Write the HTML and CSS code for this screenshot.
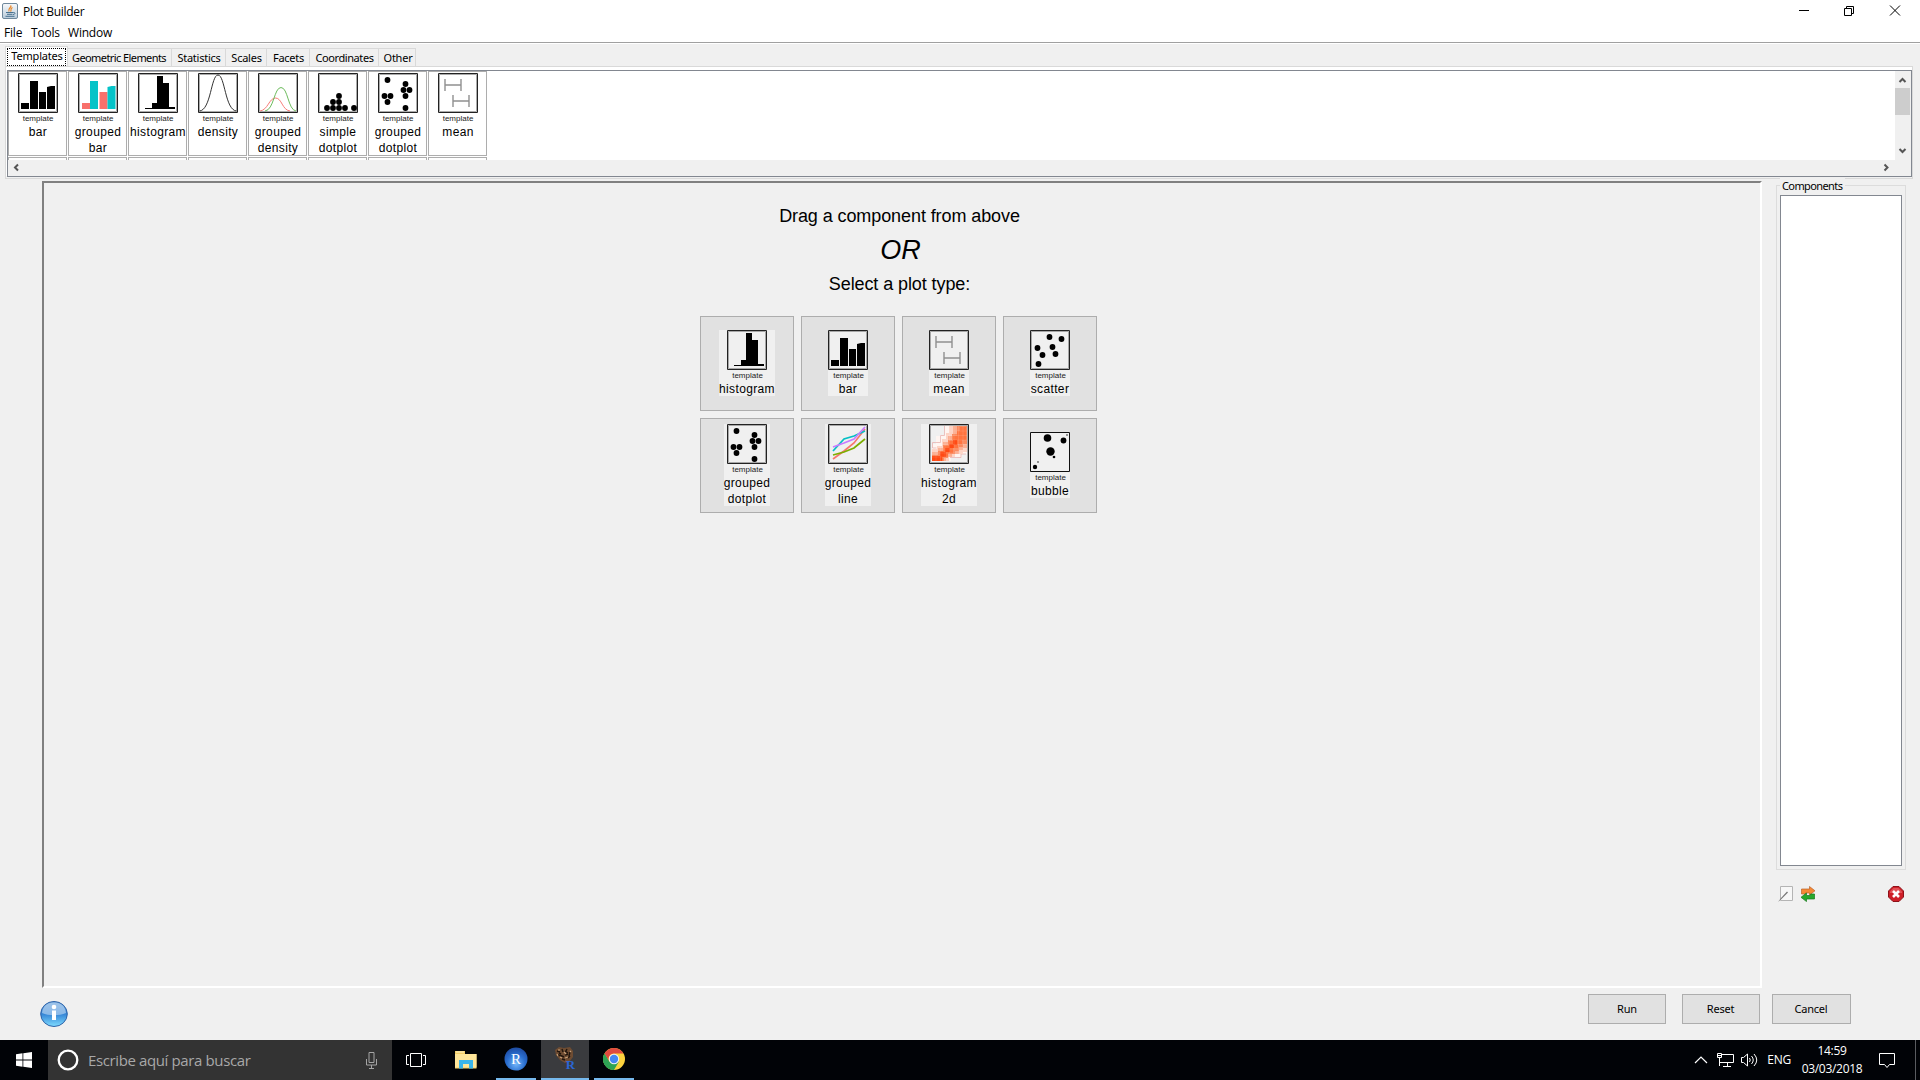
FILE: index.html
```html
<!DOCTYPE html>
<html lang="en">
<head>
<meta charset="utf-8">
<title>Plot Builder</title>
<link rel="stylesheet" href="styles.css">
</head>
<body>
<svg class="defs" aria-hidden="true">
  <symbol id="frame" viewBox="0 0 40 40"><path d="M.5 .5H39.500V39.500H.5Z" fill="none" stroke="#222"/><path d="M1.500 1.500H38.500V38.500H1.500Z" fill="none" stroke="#888" stroke-opacity=".7"/></symbol>
  <symbol id="bar" viewBox="0 0 40 40"><use href="#frame"/><path d="M3 30h8v6H3zM12 8h8v28h-8zM21 19h7v17h-7zM29 14l4-1h4v23h-8z"/></symbol>
  <symbol id="gbar" viewBox="0 0 40 40"><use href="#frame"/><path fill="#f8706b" d="M4 30h8v6H4zM21.500 19h8v17h-8z"/><path fill="#05c3c8" d="M12 8h8v28h-8zM29.500 14l4-1h4v23h-8z"/></symbol>
  <symbol id="hist" viewBox="0 0 40 40"><use href="#frame"/><path d="M7 35h7v-5h5V3h6v7h6v24h6v2H7z"/></symbol>
  <symbol id="density" viewBox="0 0 40 40"><use href="#frame"/><path fill="none" stroke="#333" d="M1.500 38C13 37 13 2 20 2s7 35 18.500 36"/></symbol>
  <symbol id="gdensity" viewBox="0 0 40 40"><use href="#frame"/><path fill="none" stroke="#f87c78" d="M2 38C10 37 11 25 17.500 25S24 37 32 38"/><path fill="none" stroke="#6cbb5c" d="M7 38C16 37 16 14.500 23 14.500S30 37 38 38"/></symbol>
  <symbol id="sdot" viewBox="0 0 40 40"><use href="#frame"/><circle cx="9" cy="35" r="2.900"/><circle cx="15" cy="35" r="2.900"/><circle cx="21" cy="35" r="2.900"/><circle cx="27" cy="35" r="2.900"/><circle cx="36" cy="35" r="2.900"/><circle cx="15" cy="29" r="2.900"/><circle cx="21" cy="29" r="2.900"/><circle cx="21" cy="23" r="2.900"/></symbol>
  <symbol id="gdot" viewBox="0 0 40 40"><use href="#frame"/><circle cx="9.500" cy="7" r="2.900"/><circle cx="6.500" cy="23" r="2.900"/><circle cx="12.500" cy="23" r="2.900"/><circle cx="9.500" cy="29" r="2.900"/><circle cx="27.500" cy="11" r="2.900"/><circle cx="25.500" cy="17" r="2.900"/><circle cx="31.500" cy="17" r="2.900"/><circle cx="27.500" cy="23" r="2.900"/><circle cx="27.500" cy="35" r="2.900"/></symbol>
  <symbol id="mean" viewBox="0 0 40 40"><use href="#frame"/><path fill="none" stroke="#909090" stroke-width="1.400" d="M7 6v12M23 6v12M7 12h16M15 22v12M31 22v12M15 28h16"/></symbol>
  <symbol id="scatter" viewBox="0 0 40 40"><use href="#frame"/><circle cx="19.500" cy="7" r="2.900"/><circle cx="31.500" cy="9" r="2.900"/><circle cx="7.500" cy="18" r="2.900"/><circle cx="22.500" cy="17" r="2.900"/><circle cx="12.500" cy="25" r="2.900"/><circle cx="25.500" cy="24" r="2.900"/><circle cx="8.500" cy="34" r="2.900"/></symbol>
  <symbol id="gline" viewBox="0 0 40 40"><use href="#frame"/><g fill="none" stroke-width="1.700"><path stroke="#f8766d" d="M5 35l11-8 10-8L37 5"/><path stroke="#7cae00" d="M5 31l11-3 10-4 11-9"/><path stroke="#05bfc4" d="M5 27l11-12 10-3 11-5"/><path stroke="#c77cff" d="M5 23l11-4 10-4L37 3"/></g></symbol>
  <symbol id="hist2d" viewBox="0 0 40 40">
    <path fill="#fff5f1" d="M16 2h22v28h-5v3H22v4H3V20h4v-8h4v-1h5z"/>
    <path fill="none" stroke="#e9b2b0" stroke-width=".8" d="M15.500 2v9.500h-4v7h-8V24h4M37 30h-5v3.500H21"/>
    <path fill="#fdd3c4" d="M20 2h18v26h-4v2h-8v3h-6v4H3v-12h5v-3h5v-7h4v-6h3z"/>
    <path fill="#fcae91" d="M24 2h14v22h-4v2h-4v4h-7v3h-6v4H3v-9h6v-4h5v-6h5v-6h5z"/>
    <path fill="#fb8a5e" d="M28 2h10v18h-4v3h-4v4h-4v3h-7v4h-4v3H3v-6h6v-4h5v-6h5v-5h4v-6h5z"/>
    <path fill="#ff7440" d="M31 3h6v13h-4v4h-4v4h-5v5h-5v4h-5v4H3v-5h8v-5h4v-5h5v-5h4v-5h4v-5h3z"/>
    <path fill="#ff4a14" d="M24 16h4v5h-4zM20 20h5v4h-5zM16 24h5v4h-5zM11 28h6v5h-6zM3 32h10v5H3z"/>
    <path stroke="#fff" stroke-opacity=".18" stroke-width=".6" d="M7 12v25M11.500 11v26M16 2v35M20.500 2v35M25 2v31M29.500 2v30M34 2v28M16 7h22M16 11.500h22M11 16h27M7 20.500h31M3 25h34M3 29h34M3 33h25"/>
    <use href="#frame"/>
  </symbol>
  <symbol id="bubble" viewBox="0 0 40 40"><path d="M.5 .5H39.500V39.500H.5Z" fill="none" stroke="#111"/><circle cx="17.500" cy="6" r="3.800"/><circle cx="33.500" cy="8.500" r="2.900"/><circle cx="37" cy="3" r=".9" fill="#666"/><circle cx="20.500" cy="19.500" r="4.200"/><circle cx="24" cy="25" r="1.300"/><circle cx="8" cy="30" r=".9" fill="#666"/><circle cx="5" cy="35" r="2.200"/></symbol>
</svg>

<header class="titlebar">
  <svg class="app-icon" width="16" height="16" viewBox="0 0 16 16"><defs><linearGradient id="jg" x1="0" y1="0" x2="0" y2="1"><stop offset="0" stop-color="#f7f9fb"/><stop offset="1" stop-color="#b9cbda"/></linearGradient></defs><rect x=".5" y=".5" width="15" height="15" rx="1.500" fill="url(#jg)" stroke="#6f889c"/><path d="M8.500 2.500C10.500 4 5.500 5 7 8.500M10.500 4.500C7.500 6 10 7 8.500 8.500" fill="none" stroke="#e8872a" stroke-width="1.200"/><path d="M4 9.500h7.500M5 11.300h5.500M3.500 13.300h9M11.500 9.500c2-.4 2 2-.5 2" fill="none" stroke="#47718f"/></svg>
  <span class="title">Plot Builder</span>
  <svg class="window-controls" width="120" height="14" viewBox="0 0 120 14" fill="none" stroke="#000"><path d="M7 7.500h10"/><path d="M52.500 5.500h7v7h-7zM54.500 5V3.500h7v7H60"/><path d="M98 2.500l10 10M108 2.500l-10 10"/></svg>
</header>
<nav class="menubar"><span class="m-file">File</span><span class="m-tools">Tools</span><span class="m-window">Window</span></nav>

<main class="app">
  <div class="tabs">
    <div class="tab active"><span>Templates</span></div><div class="tab t-geo">Geometric Elements</div><div class="tab t-stat">Statistics</div><div class="tab t-scales">Scales</div><div class="tab t-facets">Facets</div><div class="tab t-coord">Coordinates</div><div class="tab t-other">Other</div>
  </div>
  <section class="tab-pane">
    <div class="scroller">
      <div class="view">
        <div class="cells">
          <div class="cell"><svg><use href="#bar"/></svg><small>template</small><b>bar</b></div>
          <div class="cell"><svg><use href="#gbar"/></svg><small>template</small><b>grouped<br>bar</b></div>
          <div class="cell"><svg><use href="#hist"/></svg><small>template</small><b>histogram</b></div>
          <div class="cell"><svg><use href="#density"/></svg><small>template</small><b>density</b></div>
          <div class="cell"><svg><use href="#gdensity"/></svg><small>template</small><b>grouped<br>density</b></div>
          <div class="cell"><svg><use href="#sdot"/></svg><small>template</small><b>simple<br>dotplot</b></div>
          <div class="cell"><svg><use href="#gdot"/></svg><small>template</small><b>grouped<br>dotplot</b></div>
          <div class="cell"><svg><use href="#mean"/></svg><small>template</small><b>mean</b></div>
          <div class="cell"></div><div class="cell"></div><div class="cell"></div><div class="cell"></div><div class="cell"></div><div class="cell"></div><div class="cell"></div><div class="cell"></div>
        </div>
      </div>
      <div class="vbar"><svg width="15" height="17" viewBox="0 0 15 17"><path d="M4.500 11l3-3 3 3" class="arrow"/></svg><div class="thumb"></div><svg class="down" width="15" height="17" viewBox="0 0 15 17"><path d="M4.500 6l3 3 3-3" class="arrow"/></svg></div>
      <div class="hbar"><svg width="16" height="15" viewBox="0 0 16 15"><path d="M10 4.500l-3 3 3 3" class="arrow"/></svg><svg width="16" height="15" viewBox="0 0 16 15"><path d="M5.500 4.500l3 3-3 3" class="arrow"/></svg></div>
    </div>
  </section>

  <div class="workspace">
    <section class="canvas">
      <p class="hint h-drag">Drag a component from above</p>
      <p class="or">OR</p>
      <p class="hint h-select">Select a plot type:</p>
      <div class="plots">
        <button><span class="plot"><svg><use href="#hist"/></svg><small>template</small><b>histogram</b></span></button>
        <button><span class="plot"><svg><use href="#bar"/></svg><small>template</small><b>bar</b></span></button>
        <button><span class="plot"><svg><use href="#mean"/></svg><small>template</small><b>mean</b></span></button>
        <button><span class="plot"><svg><use href="#scatter"/></svg><small>template</small><b>scatter</b></span></button>
        <button><span class="plot"><svg><use href="#gdot"/></svg><small>template</small><b>grouped<br>dotplot</b></span></button>
        <button><span class="plot"><svg><use href="#gline"/></svg><small>template</small><b>grouped<br>line</b></span></button>
        <button><span class="plot"><svg><use href="#hist2d"/></svg><small>template</small><b>histogram<br>2d</b></span></button>
        <button><span class="plot"><svg><use href="#bubble"/></svg><small>template</small><b>bubble</b></span></button>
      </div>
    </section>
    <aside class="side">
      <div class="group"><span class="legend">Components</span><div class="list"></div></div>
      <div class="tools">
        <svg width="16" height="16" viewBox="0 0 16 16"><path d="M2.500 .5h12v14h-12z" fill="#f7f7f7" stroke="#b4b4b4"/><path d="M0 16l3-4 6-6.500 1 1L3.500 13z" fill="#777"/></svg>
        <svg class="swap" width="16" height="16" viewBox="0 0 16 16"><path d="M1.500 8V3h8V.5l5.500 4.300-5.500 4.200V7H5.500v1z" fill="#f58a35" stroke="#b9622d" stroke-width=".7"/><path d="M14.500 8v5h-8v2.600L1 11.300 6.500 7v2.500h4V8z" fill="#26a82b" stroke="#177a1c" stroke-width=".7"/></svg>
        <svg class="remove" width="16" height="16" viewBox="0 0 16 16"><path d="M5 .5h6L15.500 5v6L11 15.500H5L.5 11V5z" fill="#cf1f28" stroke="#8d1219"/><path d="M2 5.500L5.500 2h5L14 5.500V7H2z" fill="#e8666b" opacity=".7"/><path d="M5 5l6 6M11 5l-6 6" stroke="#fff" stroke-width="2.600"/></svg>
      </div>
    </aside>
  </div>
  <footer class="actions">
    <svg class="info" width="28" height="28" viewBox="0 0 28 28"><defs><linearGradient id="ig" x1="0" y1="0" x2="0" y2="1"><stop offset="0" stop-color="#5f9bd8"/><stop offset=".5" stop-color="#3585d6"/><stop offset="1" stop-color="#7fdcff"/></linearGradient></defs><ellipse cx="14" cy="14" rx="13.300" ry="12.500" fill="url(#ig)" stroke="#2d62a8"/><path d="M2 13C3 5 8 2.500 14 2.500S25 5 26 13C19 16 9 16 2 13z" fill="#d4e6f8" opacity=".55"/><circle cx="14" cy="7" r="2.300" fill="#fff"/><path d="M12 10.500h4v9.500h-4z" fill="#fff"/></svg>
    <button>Run</button><button class="reset">Reset</button><button class="cancel">Cancel</button>
  </footer>
</main>

<div class="taskbar">
  <div class="start"><svg width="16" height="16" viewBox="0 0 16 16" fill="#fff"><path d="M0 2.300L6.500 1.300V7.500H0zM7.300 1.200L16 0v7.500H7.300zM0 8.500h6.500v6.200L0 13.700zM7.300 8.500H16V16L7.300 14.800z"/></svg></div>
  <div class="search">
    <svg width="22" height="22" viewBox="0 0 22 22"><circle cx="11" cy="11" r="9.300" fill="none" stroke="#fff" stroke-width="2.300"/></svg>
    <span>Escribe aquí para buscar</span>
    <svg class="mic" width="11" height="17" viewBox="0 0 11 17" fill="none" stroke="#a5a5a5"><path d="M3 .5h5v10H3zM.5 7v6h10V7M5.500 13v3M3 16.500h5"/></svg>
  </div>
  <div class="task view-task"><svg width="20" height="14" viewBox="0 0 20 14" fill="none" stroke="#fff"><path d="M4.500 .5h11v13h-11zM3 2.500H.5v9H3M17 2.500h2.500v9H17"/></svg></div>
  <div class="task"><svg width="22" height="20" viewBox="0 0 22 20"><path d="M0 1h10v3h11.500v14.500H0z" fill="#f5cf68"/><path d="M0 4h21.500v13.500H0z" fill="#ffe69a"/><path d="M1 2h8" stroke="#fff5c8"/><path d="M4 10h14v8.500h-4V14H8v4.500H4z" fill="#3ab5ea"/></svg></div>
  <div class="task open"><svg width="24" height="24" viewBox="0 0 24 24"><defs><radialGradient id="rg" cx=".5" cy=".7" r=".65"><stop offset="0" stop-color="#75b8fb"/><stop offset=".6" stop-color="#2a6fd0"/><stop offset="1" stop-color="#2050a8"/></radialGradient></defs><circle cx="12" cy="12" r="11.500" fill="url(#rg)"/><text x="12" y="16.500" text-anchor="middle" class="r-letter">R</text></svg></div>
  <div class="task open current"><svg width="24" height="26" viewBox="0 0 24 26"><path d="M2 4l4-3 5 1 6-1 3 4v6l-3 4-5 2-5-3-4-5z" fill="#6e4c32"/><path d="M4 5l3 1M9 3l1 3M14 3l-1 2M5 9l4 1M12 9l3-1M17 6l-1 4M9 13l3 1M6 7l2 1M15 12l2-2M12 5l3 2M9 10l2 1" stroke="#21150d" stroke-width="1.400"/><path d="M5 4h2M11 6l2 2M7 11l2 1M12 12l3-1M17 5l1 1M4 8l1 2" stroke="#c9a27a" stroke-width="1.100"/><text x="17.500" y="23" text-anchor="middle" class="dr-letter">R</text></svg></div>
  <div class="task open chrome"><svg width="22" height="22" viewBox="0 0 22 22"><circle cx="11" cy="11" r="11" fill="#fdd23e"/><path d="M11 11L6.200 13.700 1.500 5.500A11 11 0 0 0 11 22l4.800-8.200z" fill="#2ea354"/><path d="M1.500 5.500A11 11 0 0 1 20.500 5.500H11a5.500 5.500 0 0 0-4.800 8.200z" fill="#e04a3f"/><path d="M1.500 5.500L6.200 13.700 11 16.500 11 22A11 11 0 0 1 1.500 5.500z" fill="#2ea354"/><circle cx="11" cy="11" r="5.200" fill="#f4f4f4"/><circle cx="11" cy="11" r="4.200" fill="#4587f3"/></svg></div>
  <div class="tray">
    <svg width="14" height="8" viewBox="0 0 14 8" fill="none" stroke="#fff" stroke-width="1.200"><path d="M1 7l6-6 6 6"/></svg>
    <svg class="net" width="17" height="14" viewBox="0 0 17 14" fill="none" stroke="#fff"><path d="M5 1.500h11.500v8H5M.5 .5h4v4h-4zM2.500 5v8M2.500 9.500h4M10.500 10v3M6 13.500h8M1 2.500h3"/></svg>
    <svg class="vol" width="17" height="14" viewBox="0 0 17 14" fill="none" stroke="#fff"><path d="M.5 4.500h2l4-3.500v12l-4-3.500h-2z"/><path d="M8.500 5q1.500 2 0 4M10.500 3q3.500 4 0 8M13 1q5.500 6 0 12"/></svg>
    <span class="lang">ENG</span>
    <div class="clock"><span class="time">14:59</span><span class="date">03/03/2018</span></div>
    <svg class="note" width="17" height="17" viewBox="0 0 17 17" fill="none" stroke="#fff"><path d="M.5 1.500h15v11h-5L8 15.500l-2.500-3h-5z"/></svg>
    <i class="peek"></i>
  </div>
</div>
</body>
</html>
```
FILE: styles.css
```css
* { box-sizing: border-box; }
html, body { margin: 0; height: 100%; overflow: hidden; }
body {
  width: 1920px; height: 1080px; display: flex; flex-direction: column;
  background: #f0f0f0; color: #000;
  font: 11px/14px "Noto Sans", "Open Sans", sans-serif;
}
svg { display: block; flex: none; }
.defs { position: absolute; width: 0; height: 0; }
p { margin: 0; }
button { font: inherit; color: inherit; padding: 0; border: 1px solid #adadad; background: #e1e1e1; border-radius: 0; }

.titlebar { height: 23px; flex: none; background: #fff; display: flex; align-items: flex-start; padding-left: 2px; }
.app-icon { margin-top: 3px; }
.title { margin: 4px 0 0 5px; font: 12px/16px "Open Sans", sans-serif; letter-spacing: -0.3px; }
.window-controls { margin: 3px 8px 0 auto; }
.menubar { height: 21px; flex: none; background: #fff; border-bottom: 1px solid #fff; box-shadow: inset 0 -1px #a0a0a0; display: flex; padding: 2px 0 0 4px; font: 12px/16px "Open Sans", sans-serif; letter-spacing: -0.2px; }
.m-file { width: 27px; }
.m-tools { width: 37px; }

.app { flex: 1; min-height: 0; display: flex; flex-direction: column; }
.tabs { height: 22px; flex: none; display: flex; align-items: flex-end; padding-left: 5px; }
.tab { height: 18px; border: 1px solid #d9d9d9; border-left: 0; border-bottom: 0; text-align: center; line-height: 18px; white-space: nowrap; letter-spacing: -0.25px; padding-left: 1px; }
.tab.active { width: 63px; height: 20px; border-left: 1px solid #d9d9d9; background: #fff; padding: 1px; letter-spacing: -0.2px; }
.tab.active span { display: block; height: 18px; padding-left: 1px; border: 1px dotted #000; line-height: 14px; }
.t-geo { width: 104px; padding: 0 1px 0 0; letter-spacing: -0.58px; }
.t-stat { width: 54px; } .t-scales { width: 41px; }
.t-facets { width: 43px; } .t-coord { width: 69px; letter-spacing: -0.4px; } .t-other { width: 37px; padding-left: 2px; }

.tab-pane { height: 113px; width: 1908px; margin-left: 5px; flex: none; border: 1px solid #d9d9d9; padding: 3px 0 0 1px; background: #fff; box-shadow: inset 0 -2px #f0f0f0; }
.scroller { width: 1905px; height: 107px; border: 1px solid #828790; background: #f0f0f0; display: grid; grid-template-columns: 1887px 15px; grid-template-rows: 89px 15px; }
.view { background: #fff; overflow: hidden; }
.cells { display: grid; grid-template-columns: repeat(8, 59px); grid-auto-rows: 85px; gap: 1px; }
.cell { border: 1px solid #adadad; padding-top: 1px; display: flex; flex-direction: column; align-items: center; }
.cell svg, .plot svg { width: 40px; height: 40px; }
.cell small, .plot small { height: 11px; padding: 1px 0 0 1px; font: 8px/10px "Liberation Sans", sans-serif; color: #222; }
.cell b, .plot b { font: 12px/16px "Liberation Sans", sans-serif; letter-spacing: .35px; text-align: center; white-space: nowrap; }
.cell b { padding-left: 1px; }
.arrow { fill: none; stroke: #555; stroke-width: 2; }
.vbar { display: flex; flex-direction: column; }
.thumb { height: 27px; background: #cdcdcd; }
.down { margin-top: auto; }
.hbar { display: flex; justify-content: space-between; }

.workspace { display: flex; margin-top: 2px; flex: none; }
.canvas { width: 1720px; height: 807px; margin-left: 42px; border: 2px solid; border-color: #808080 #fff #fff #808080; display: flex; flex-direction: column; align-items: center; padding: 21px 5px 0 0; }
.hint { font: 18px/24px "Liberation Sans", sans-serif; letter-spacing: -0.09px; }
.or { font: italic 27px/34px "Liberation Sans", sans-serif; margin-top: 5px; margin-bottom: 5px; padding-left: 2px; }
.plots { margin: 20px 2px 0 0; display: grid; grid-template-columns: repeat(4, 94px); grid-auto-rows: 95px; gap: 7px; }
.plots button { display: flex; align-items: center; justify-content: center; }
.plot { min-width: 40px; margin-bottom: 1px; background: #f0f0f0; display: flex; flex-direction: column; align-items: center; }
.plot b { margin-bottom: -1px; }

.side { width: 130px; margin-left: 14px; }
.group { height: 685px; margin-top: 4px; border: 1px solid #dcdcdc; padding: 0 3px 3px; display: flex; flex-direction: column; align-items: flex-start; }
.legend { background: #f0f0f0; padding: 0 3px 0 2px; margin-top: -9px; height: 18px; line-height: 17px; letter-spacing: -0.6px; }
.list { flex: 1; align-self: stretch; border: 1px solid #828790; background: #fff; }
.tools { display: flex; padding: 16px 0 0 2px; }
.swap { margin-left: 6px; }
.remove { margin-left: auto; margin-right: 2px; }

.actions { display: flex; align-items: flex-start; padding: 6px 0 0 40px; }
.info { margin: 6px 1520px 0 0; }
.actions button { width: 78px; height: 30px; margin-right: 16px; letter-spacing: -0.2px; }
.actions .reset { margin-right: 12px; padding-right: 1px; }
.actions .cancel { width: 79px; margin-right: 0; padding-right: 1px; }

.taskbar { height: 40px; flex: none; background: #010307; color: #fff; display: flex; font: 12px/16px "Open Sans", sans-serif; }
.start { width: 48px; display: grid; place-items: center; }
.search { width: 344px; background: #333; display: flex; align-items: center; padding: 0 15px 0 9px; color: #a8a8a8; font-size: 15px; }
.search span { margin-left: 9px; letter-spacing: -0.38px; }
.mic { margin-left: auto; }
.task { width: 49px; display: grid; place-items: center; }
.view-task { padding-right: 2px; }
.task.open { width: 40px; margin-left: 6px; border-bottom: 2px solid #76b9ed; }
.task.current { width: 48px; margin: 0 0 0 5px; background: #3a3b3e; }
.task.chrome { margin-left: 5px; }
.r-letter { font: 15px "Liberation Serif", serif; fill: #fff; }
.dr-letter { font: bold 13px "Liberation Serif", serif; fill: #2b66d4; }
.tray { margin-left: auto; display: flex; align-items: center; }
.net { margin-left: 9px; }
.vol { margin-left: 7px; }
.lang { margin-left: 9px; letter-spacing: -0.2px; }
.clock { width: 70px; margin-left: 6px; display: flex; flex-direction: column; align-items: center; line-height: 18px; letter-spacing: -0.3px; }
.note { margin-left: 12px; }
.peek { width: 1px; height: 40px; background: #5a5c60; margin: 0 4px 0 19px; }
```
